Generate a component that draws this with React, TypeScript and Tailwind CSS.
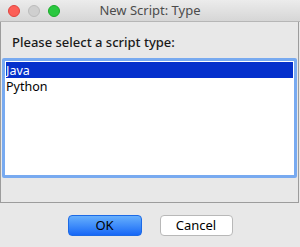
import React from "react";

export default function App() {
  const font = { fontFamily: '"Noto Sans", "DejaVu Sans", sans-serif' };
  return (
    <div className="w-[300px] h-[247px] bg-[#e8e8e8] flex flex-col overflow-hidden" style={font}>
      {/* Title bar */}
      <div className="relative h-[22px] shrink-0 bg-gradient-to-b from-[#ececec] to-[#d6d6d6] border-b border-[#b6b6b6] flex items-center justify-center">
        <div className="absolute left-[8px] top-[5px] flex gap-[8px]">
          <span className="w-[12px] h-[12px] rounded-full bg-[#fc5f57] border border-[#e0443e]" />
          <span className="w-[12px] h-[12px] rounded-full bg-[#cfcfcf] border border-[#bcbcbc]" />
          <span className="w-[12px] h-[12px] rounded-full bg-[#2ac840] border border-[#1aab29]" />
        </div>
        <span className="text-[13px] leading-none text-[#4c4c4c]">New Script: Type</span>
      </div>
      {/* Panel */}
      <div className="h-[181px] shrink-0 border-x border-b border-[#9c9c9c] mr-[1px] flex flex-col">
        <div className="h-[36px] pl-[11px] pt-[11px] text-[13px] leading-[18px] text-[#1a1a1a] font-medium">
          Please select a script type:
        </div>
        <div className="mx-[1px] h-[120px] border-[3px] border-[#78aaf0] rounded-[2px] bg-white p-[1px] flex flex-col">
          <div className="h-[16px] bg-[#0530cc] text-white text-[12.5px] leading-[15px] pt-[1px] pl-0 overflow-hidden">Java</div>
          <div className="h-[16px] text-black text-[12.5px] leading-[15px] pt-[1px] pl-0 overflow-hidden">Python</div>
        </div>
      </div>
      {/* Buttons */}
      <div className="flex justify-center gap-[18px] pt-[12px]">
        <button className="w-[74px] h-[21px] rounded-[4px] bg-gradient-to-b from-[#67affc] to-[#1767f6] border border-[#1c6ae6] text-[13px] leading-none text-black">
          OK
        </button>
        <button className="w-[73px] h-[21px] rounded-[4px] bg-white border border-[#b8b8b8] text-[13px] leading-none text-black">
          Cancel
        </button>
      </div>
    </div>
  );
}
